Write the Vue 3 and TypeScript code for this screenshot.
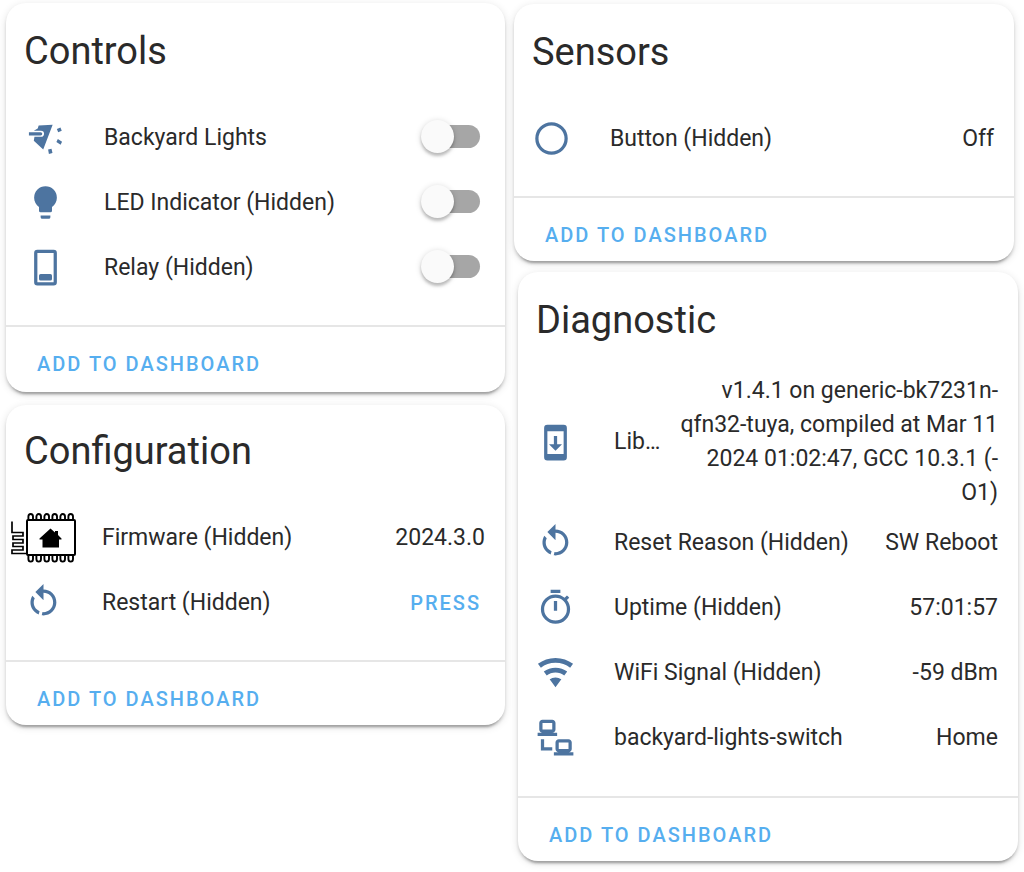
<script setup lang="ts">
interface Row {
  id: string
  name: string
  icon: string
  kind: 'toggle' | 'press' | 'text'
  value?: string
  tall?: boolean
}

interface Card {
  id: string
  title: string
  rows: Row[]
}

const restart =
  'M12,4C14.1,4 16.1,4.8 17.6,6.3C20.7,9.4 20.7,14.5 17.6,17.6C15.8,19.5 13.3,20.2 10.9,19.9L11.4,17.9C13.1,18.1 14.9,17.5 16.2,16.2C18.5,13.9 18.5,10.1 16.2,7.7C15.1,6.6 13.5,6 12,6V10.6L7,5.6L12,0.6V4M6.3,17.6C3.7,15 3.3,11 5.1,7.9L6.6,9.4C5.5,11.6 5.9,14.4 7.8,16.2C8.3,16.7 8.9,17.1 9.6,17.4L9,19.4C8,19 7.1,18.4 6.3,17.6Z'

const icons: Record<string, string> = {
  restart,
  spotlight:
    'M1.8,8.7H9A1,1 0 0,1 9,10.7H1.8ZM7.8,4.6L16.4,4.1L10.6,19.4L4.8,14L5.2,11.6H9.2A1.900,1.900 0 0,0 9.200,7.800H4.800L7.200,6.500ZM19,6.700L21.200,5.900L22,7.900L19.800,8.800ZM19.600,12.900L22.200,14.600L21.300,16.500L18.700,14.800ZM13.600,19.400L15.700,18.900L16.300,21.500L14.100,22.100Z',
  bulb: 'M12,2A7,7 0 0,0 5,9C5,11.38 6.19,13.47 8,14.74V17A1,1 0 0,0 9,18H15A1,1 0 0,0 16,17V14.74C17.81,13.47 19,11.38 19,9A7,7 0 0,0 12,2M9,21A1,1 0 0,0 10,22H14A1,1 0 0,0 15,21V20H9V21Z',
  relay:
    'M7,1H17A2,2 0 0,1 19,3V21A2,2 0 0,1 17,23H7A2,2 0 0,1 5,21V3A2,2 0 0,1 7,1M7,3V21H17V3H7M9,16H15A1,1 0 0,1 16,17V19A1,1 0 0,1 15,20H9A1,1 0 0,1 8,19V17A1,1 0 0,1 9,16Z',
  circle:
    'M12,20A8,8 0 0,1 4,12A8,8 0 0,1 12,4A8,8 0 0,1 20,12A8,8 0 0,1 12,20M12,2A10,10 0 0,0 2,12A10,10 0 0,0 12,22A10,10 0 0,0 22,12A10,10 0 0,0 12,2Z',
  phone:
    'M17,1H7A2,2 0 0,0 5,3V21A2,2 0 0,0 7,23H17A2,2 0 0,0 19,21V3A2,2 0 0,0 17,1M17,19H7V5H17V19M16,13H13V8H11V13H8L12,17L16,13Z',
  timer:
    'M12,20A7,7 0 0,1 5,13A7,7 0 0,1 12,6A7,7 0 0,1 19,13A7,7 0 0,1 12,20M19.03,7.39L20.45,5.97C20,5.46 19.55,5 19.04,4.56L17.62,6C16.07,4.74 14.12,4 12,4A9,9 0 0,0 3,13A9,9 0 0,0 12,22C17,22 21,17.97 21,13C21,10.88 20.26,8.93 19.03,7.39M11,14H13V8H11M15,1H9V3H15V1Z',
  wifi: 'M12,21L15.6,16.2C14.6,15.45 13.35,15 12,15C10.65,15 9.4,15.45 8.4,16.2L12,21M12,3C7.95,3 4.21,4.34 1.2,6.6L3,9C5.5,7.12 8.62,6 12,6C15.38,6 18.5,7.12 21,9L22.8,6.6C19.79,4.34 16.05,3 12,3M12,9C9.3,9 6.81,9.89 4.8,11.4L6.6,13.8C8.1,12.67 9.97,12 12,12C14.03,12 15.9,12.67 17.4,13.8L19.2,11.4C17.19,9.89 14.7,9 12,9Z',
  lan: 'M4,1C2.89,1 2,1.89 2,3V7C2,8.11 2.89,9 4,9H1V11H13V9H10C11.11,9 12,8.11 12,7V3C12,1.89 11.11,1 10,1H4M4,3H10V7H4V3M3,13V18L3,20H10V18H5V13H3M14,13C12.89,13 12,13.89 12,15V19C12,20.11 12.89,21 14,21H11V23H23V21H20C21.11,21 22,20.11 22,19V15C22,13.89 21.11,13 20,13H14M14,15H20V19H14V15Z',
}

const columns: Card[][] = [
  [
    {
      id: 'controls',
      title: 'Controls',
      rows: [
        { id: 'backyard', name: 'Backyard Lights', icon: 'spotlight', kind: 'toggle' },
        { id: 'led', name: 'LED Indicator (Hidden)', icon: 'bulb', kind: 'toggle' },
        { id: 'relay', name: 'Relay (Hidden)', icon: 'relay', kind: 'toggle' },
      ],
    },
    {
      id: 'configuration',
      title: 'Configuration',
      rows: [
        { id: 'firmware', name: 'Firmware (Hidden)', icon: 'chip', kind: 'text', value: '2024.3.0' },
        { id: 'restart', name: 'Restart (Hidden)', icon: 'restart', kind: 'press', value: 'PRESS' },
      ],
    },
  ],
  [
    {
      id: 'sensors',
      title: 'Sensors',
      rows: [{ id: 'button', name: 'Button (Hidden)', icon: 'circle', kind: 'text', value: 'Off' }],
    },
    {
      id: 'diagnostic',
      title: 'Diagnostic',
      rows: [
        {
          id: 'lib',
          name: 'Lib…',
          icon: 'phone',
          kind: 'text',
          tall: true,
          value: 'v1.4.1 on generic-bk7231n-qfn32-tuya, compiled at Mar 11 2024 01:02:47, GCC 10.3.1 (-O1)',
        },
        { id: 'reset', name: 'Reset Reason (Hidden)', icon: 'restart', kind: 'text', value: 'SW Reboot' },
        { id: 'uptime', name: 'Uptime (Hidden)', icon: 'timer', kind: 'text', value: '57:01:57' },
        { id: 'wifi', name: 'WiFi Signal (Hidden)', icon: 'wifi', kind: 'text', value: '-59 dBm' },
        { id: 'tracker', name: 'backyard-lights-switch', icon: 'lan', kind: 'text', value: 'Home' },
      ],
    },
  ],
]

const pins = [0, 1, 2, 3, 4, 5]
</script>

<template>
  <main class="page">
    <div v-for="(column, c) in columns" :key="c" class="column">
      <section v-for="card in column" :key="card.id" class="card" :class="card.id">
        <h2 class="title">{{ card.title }}</h2>
        <div class="rows">
          <div v-for="row in card.rows" :key="row.id" class="row">
            <span class="icon">
              <svg v-if="row.icon === 'chip'" class="chip" viewBox="0 0 66 50" aria-hidden="true">
                <g fill="none" stroke="#000">
                  <rect x="16" y="7" width="48" height="35" rx="1" stroke-width="2" />
                  <g stroke-width="1.9">
                    <path
                      v-for="p in pins"
                      :key="'t' + p"
                      :d="`M${17.4 + p * 8} 7V3.600a2.300 2.600 0 0 1 4.600 0V7`"
                    />
                    <path
                      v-for="p in pins"
                      :key="'b' + p"
                      :d="`M${17.4 + p * 8} 42V46a2.300 2.600 0 0 0 4.600 0V42`"
                    />
                  </g>
                  <path
                    d="M1 8.500V19.500H12V23H2V26.500H12V30H2V33.500H12V37H1V40.500H16"
                    stroke-width="1.7"
                  />
                </g>
                <path
                  d="M39.500 15.500L44 19.500V18H47V22L50.500 25.500V26.500H48V34.500H31.500V26.500H28.500V25.500Z"
                  fill="#000"
                />
              </svg>
              <svg v-else class="glyph" viewBox="0 0 24 24" aria-hidden="true">
                <path :d="icons[row.icon]" />
              </svg>
            </span>
            <label v-if="row.kind === 'toggle'" class="name" :for="row.id">{{ row.name }}</label>
            <span v-else class="name">{{ row.name }}</span>
            <input v-if="row.kind === 'toggle'" :id="row.id" class="toggle" type="checkbox" role="switch" />
            <button v-else-if="row.kind === 'press'" class="action press" type="button">{{ row.value }}</button>
            <span v-else class="value" :class="{ tall: row.tall }">{{ row.value }}</span>
          </div>
        </div>
        <footer class="footer">
          <button class="action" type="button">ADD TO DASHBOARD</button>
        </footer>
      </section>
    </div>
  </main>
</template>

<style>
body {
  margin: 0;
  background: #fff;
}
</style>

<style scoped>
.page {
  display: grid;
  grid-template-columns: 499fr 504fr;
  column-gap: 9px;
  align-items: start;
  padding: 3px 6px 10px;
  font-family: Roboto, "Liberation Sans", sans-serif;
  color: #2a2a2a;
}
.column {
  display: flex;
  flex-direction: column;
  gap: 13px;
  min-width: 0;
}
.column + .column {
  gap: 11px;
  padding-top: 1px;
}
.card {
  padding-top: 24px;
  border-radius: 20px;
  background: #fff;
  box-shadow:
    0 3px 3px rgba(0, 0, 0, 0.14),
    0 2px 8px rgba(0, 0, 0, 0.12),
    0 5px 2px -3px rgba(0, 0, 0, 0.2);
}
.configuration {
  padding-top: 22px;
}
.sensors {
  margin-right: 4px;
}
.diagnostic {
  margin-left: 4px;
}
.title {
  margin: 0 18px 29px;
  font-size: 38px;
  line-height: 48px;
  font-weight: 400;
}
.rows {
  padding: 1px 20px 25px 18px;
}
.controls .rows {
  padding-left: 20px;
  padding-right: 25px;
}
.diagnostic .rows {
  padding-bottom: 26px;
}
.row {
  display: flex;
  align-items: center;
  min-height: 65px;
}
.icon {
  display: flex;
  flex: none;
  align-items: center;
  justify-content: center;
  width: 39px;
  height: 40px;
  margin-right: 39px;
}
.glyph {
  flex: none;
  width: 39px;
  height: 39px;
  fill: #4d74a0;
}
.chip {
  flex: none;
  width: 66px;
  height: 50px;
}
.name {
  flex: 1;
  min-width: 0;
  font-size: 23px;
  line-height: 34px;
  white-space: nowrap;
}
.value {
  flex: none;
  font-size: 23px;
  line-height: 34px;
  text-align: right;
}
.tall {
  width: 324px;
}
.toggle {
  appearance: none;
  display: flex;
  align-items: center;
  width: 59px;
  height: 33px;
  margin: 0 0 2px;
}
.toggle::before {
  content: "";
  z-index: 1;
  flex: none;
  width: 33px;
  height: 33px;
  border-radius: 50%;
  background: #fafafa;
  box-shadow:
    0 3px 3px rgba(0, 0, 0, 0.2),
    0 1px 6px rgba(0, 0, 0, 0.16);
}
.toggle::after {
  content: "";
  flex: none;
  width: 46px;
  height: 23px;
  margin-left: -20px;
  border-radius: 12px;
  background: #a6a6a6;
}
.footer {
  box-sizing: border-box;
  height: 65px;
  padding: 21px 32px 0 31px;
  border-top: 2px solid #e6e6e6;
}
.controls .footer {
  height: 67px;
}
.action {
  padding: 0;
  border: 0;
  background: none;
  font: 500 20px/32px Roboto, "Liberation Sans", sans-serif;
  letter-spacing: 2px;
  color: #56aeef;
}
.press {
  margin-right: 4px;
}
</style>
